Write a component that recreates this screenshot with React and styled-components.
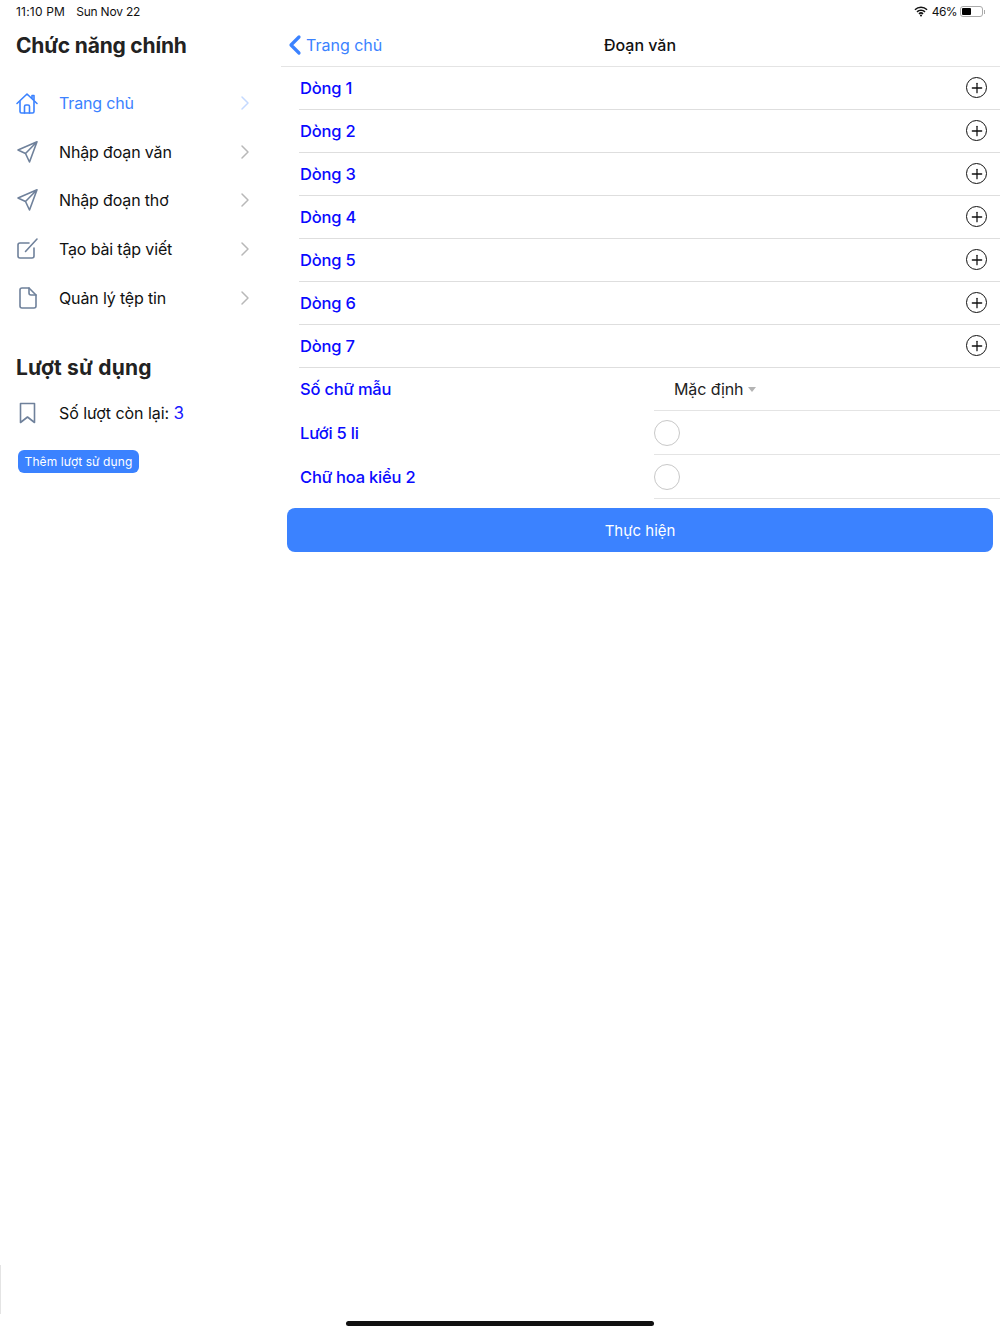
import React from 'react'
import styled, { createGlobalStyle } from 'styled-components'
import { ChevronRight, ChevronLeft, Plus } from 'lucide-react'

const GlobalStyle = createGlobalStyle`
  html, body { margin: 0; padding: 0; background: #fff; }
  body { font-family: Inter, "Noto Sans", "Liberation Sans", sans-serif; }
  * { box-sizing: border-box; }
`

const HomeIcon = () => (
  <LineIcon viewBox="0 0 24 24">
    <path d="M2 12.500 12 3l10 9.500M17 7.500V4.500h2v4.800" />
    <path d="M5 10.500v10a1.500 1.500 0 0 0 1.500 1.500h11a1.500 1.500 0 0 0 1.500-1.500v-10" />
    <path d="M9.500 22v-6.500a1.500 1.500 0 0 1 1.500-1.500h2a1.500 1.500 0 0 1 1.500 1.500V22" />
  </LineIcon>
)

const PlaneIcon = () => (
  <LineIcon viewBox="0 0 24 24">
    <path d="M22 1.800 3 10l7.500 3.500 4 8.500zM22 1.800 10.500 13.500" />
  </LineIcon>
)

const PenIcon = () => (
  <LineIcon viewBox="0 0 24 24">
    <path d="M14 6H5a2 2 0 0 0-2 2v11a2 2 0 0 0 2 2h12a2 2 0 0 0 2-2v-8" />
    <path d="M10.500 14.500 22 2" />
  </LineIcon>
)

const FileIcon = () => (
  <LineIcon viewBox="0 0 24 24">
    <path d="M5 4a2 2 0 0 1 2-2h7l7 7v11a2 2 0 0 1-2 2H7a2 2 0 0 1-2-2z" />
    <path d="M14 2v5a2 2 0 0 0 2 2h5" />
  </LineIcon>
)

const BookmarkIcon = () => (
  <LineIcon viewBox="0 0 24 24">
    <path d="M5.500 2.500h14v19l-7-5.500-7 5.500z" />
  </LineIcon>
)

const menu = [
  { label: 'Trang chủ', Icon: HomeIcon, active: true },
  { label: 'Nhập đoạn văn', Icon: PlaneIcon },
  { label: 'Nhập đoạn thơ', Icon: PlaneIcon },
  { label: 'Tạo bài tập viết', Icon: PenIcon },
  { label: 'Quản lý tệp tin', Icon: FileIcon },
]

const lines = ['Dòng 1', 'Dòng 2', 'Dòng 3', 'Dòng 4', 'Dòng 5', 'Dòng 6', 'Dòng 7']

export default function App() {
  return (
    <Page>
      <GlobalStyle />
      <StatusBar>
        <StatusLeft><TimeText>11:10 PM</TimeText><DateText>Sun Nov 22</DateText></StatusLeft>
        <StatusRight>
          <svg width="14" height="11" viewBox="0 0 15 11">
            <path d="M1 3.600a9.400 9.400 0 0 1 13 0M3.200 5.900a6.200 6.200 0 0 1 8.600 0M5.300 8a3.200 3.200 0 0 1 4.400 0" fill="none" stroke="#111" strokeWidth="1.600" />
            <circle cx="7.500" cy="9.800" r="1.100" fill="#111" />
          </svg>
          <Percent>46%</Percent>
          <Battery><BatteryFill style={{ width: '46%' }} /></Battery>
          <BatteryTip />
        </StatusRight>
      </StatusBar>
      <Body>
        <Sidebar>
          <SideTitle>Chức năng chính</SideTitle>
          <Menu>
            {menu.map(({ label, Icon, active }) => (
              <MenuItem key={label} $active={active}>
                <IconSlot><Icon /></IconSlot>
                <MenuLabel>{label}</MenuLabel>
                <Chevron $active={active}><ChevronRight size={24} strokeWidth={1.500} /></Chevron>
              </MenuItem>
            ))}
          </Menu>
          <UsageTitle>Lượt sử dụng</UsageTitle>
          <UsageRow>
            <IconSlot><BookmarkIcon /></IconSlot>
            <Remaining>Số lượt còn lại: <Count>3</Count></Remaining>
          </UsageRow>
          <AddButton>Thêm lượt sử dụng</AddButton>
          <Sliver />
        </Sidebar>
        <Main>
          <NavBar>
            <BackLink><ChevronLeft size={32} strokeWidth={2.400} /><span>Trang chủ</span></BackLink>
            <NavTitle>Đoạn văn</NavTitle>
          </NavBar>
          {lines.map((line) => (
            <LineRow key={line}>
              <BlueLabel>{line}</BlueLabel>
              <AddCircle><Plus size={16} strokeWidth={1.900} /></AddCircle>
            </LineRow>
          ))}
          <OptionRow $height={43}>
            <BlueLabel>Số chữ mẫu</BlueLabel>
            <OptionValue>
              <PickerText>Mặc định</PickerText>
              <Caret />
            </OptionValue>
          </OptionRow>
          <OptionRow>
            <BlueLabel>Lưới 5 li</BlueLabel>
            <OptionValue><Radio /></OptionValue>
          </OptionRow>
          <OptionRow>
            <BlueLabel>Chữ hoa kiểu 2</BlueLabel>
            <OptionValue><Radio /></OptionValue>
          </OptionRow>
          <SubmitButton>Thực hiện</SubmitButton>
        </Main>
      </Body>
      <HomeArea><HomeIndicator /></HomeArea>
    </Page>
  )
}

const Page = styled.div`
  width: 1000px;
  height: 1334px;
  display: flex;
  flex-direction: column;
  overflow: hidden;
  background: #fff;
`

const StatusBar = styled.div`
  height: 24px;
  display: flex;
  justify-content: space-between;
  align-items: center;
  padding: 0 15px 1px 16px;
  font-size: 12px;
  color: #111;
`

const StatusLeft = styled.div`
  display: flex;
  gap: 11px;
`

const TimeText = styled.span`
  letter-spacing: 0.2px;
`

const DateText = styled.span`
  letter-spacing: -0.2px;
`

const StatusRight = styled.div`
  display: flex;
  align-items: center;
  gap: 3px;
  svg { margin-right: 1px; }
`

const Percent = styled.span`
  letter-spacing: -0.600px;
`

const Battery = styled.div`
  width: 23px;
  height: 11px;
  border: 1px solid #aaa;
  border-radius: 3px;
  padding: 1px;
`

const BatteryFill = styled.div`
  height: 100%;
  background: #000;
  border-radius: 1px;
`

const BatteryTip = styled.div`
  width: 1px;
  height: 4px;
  background: #aaa;
  margin-left: -2px;
`

const Body = styled.div`
  flex: 1;
  display: flex;
  min-height: 0;
`

const Sidebar = styled.aside`
  width: 281px;
  display: flex;
  flex-direction: column;
  align-items: flex-start;
`

const SideTitle = styled.h2`
  margin: 1px 0 0;
  height: 42px;
  line-height: 42px;
  padding-left: 16px;
  font-size: 21px;
  font-weight: 700;
  letter-spacing: -0.2px;
  color: #222;
`

const Menu = styled.nav`
  width: 100%;
  margin-top: 11.500px;
`

const MenuItem = styled.div`
  height: 48.800px;
  display: flex;
  align-items: center;
  padding: 0 20px 0 15px;
  color: ${(p) => (p.$active ? '#3b82ff' : '#111')};
  svg { color: ${(p) => (p.$active ? '#3b82ff' : '#6f819b')}; }
`

const IconSlot = styled.span`
  width: 44px;
  flex: none;
  display: flex;
`

const LineIcon = styled.svg`
  width: 24px;
  height: 24px;
  fill: none;
  stroke: currentColor;
  stroke-width: 1.600;
  stroke-linejoin: round;
  stroke-linecap: round;
`

const MenuLabel = styled.span`
  flex: 1;
  font-size: 16px;
  letter-spacing: -0.150px;
`

const Chevron = styled.span`
  display: flex;
  margin-right: 4px;
  svg { color: ${(p) => (p.$active ? '#c4d9ff' : '#b8b8b8')}; }
`

const UsageTitle = styled.h2`
  margin: 31px 0 0;
  padding-left: 16px;
  line-height: 30px;
  font-size: 21px;
  font-weight: 700;
  letter-spacing: 0.2px;
  color: #222;
`

const UsageRow = styled.div`
  width: 100%;
  height: 48px;
  margin-top: 6px;
  display: flex;
  align-items: center;
  padding-left: 15px;
  color: #111;
  svg { color: #6f819b; }
`

const Remaining = styled.span`
  flex: 1;
  font-size: 16px;
  letter-spacing: -0.050px;
`

const Count = styled.span`
  font-size: 17px;
  color: #1a1aff;
`

const AddButton = styled.button`
  margin: 13px 0 0 18px;
  width: 121px;
  height: 23px;
  padding: 0;
  border: 0;
  border-radius: 6px;
  background: #3b82ff;
  color: #fff;
  font: 400 12px Inter, sans-serif;
  letter-spacing: 0.1px;
`

const Sliver = styled.div`
  margin-top: auto;
  width: 1px;
  height: 49px;
  background: #e4e4e4;
`

const Main = styled.main`
  flex: 1;
  min-width: 0;
`

const NavBar = styled.header`
  position: relative;
  height: 43px;
  padding-right: 1px;
  display: flex;
  align-items: center;
  justify-content: center;
  border-bottom: 1px solid #e4e4e4;
`

const BackLink = styled.a`
  position: absolute;
  left: -2px;
  top: 0;
  height: 42px;
  display: flex;
  align-items: center;
  color: #3b82ff;
  font-size: 16px;
  span { margin-left: -5px; }
`

const NavTitle = styled.div`
  font-size: 16px;
  font-weight: 500;
  color: #111;
`

const LineRow = styled.div`
  height: 43px;
  margin-left: 18px;
  display: flex;
  align-items: center;
  justify-content: space-between;
  padding-right: 13px;
  border-bottom: 1px solid #dedede;
`

const BlueLabel = styled.span`
  padding-left: 1px;
  font-size: 16.500px;
  font-weight: 500;
  letter-spacing: -0.200px;
  color: #0a0aff;
`

const AddCircle = styled.span`
  width: 21px;
  height: 21px;
  margin-bottom: 1px;
  border: 1.800px solid #111;
  border-radius: 50%;
  display: flex;
  align-items: center;
  justify-content: center;
  color: #111;
`

const OptionRow = styled.div`
  height: ${(p) => p.$height || 44}px;
  margin-left: 18px;
  display: grid;
  grid-template-columns: 355px 1fr;
  align-items: center;
  > span { padding-bottom: ${(p) => (p.$height ? 2 : 0)}px; }
`

const OptionValue = styled.div`
  height: 100%;
  display: flex;
  align-items: center;
  border-bottom: 1px solid #e4e4e4;
`

const PickerText = styled.span`
  margin-left: 20px;
  font-size: 16px;
  letter-spacing: -0.100px;
  color: #222;
`

const Caret = styled.span`
  margin-left: 5px;
  width: 0;
  height: 0;
  border-left: 4.500px solid transparent;
  border-right: 4.500px solid transparent;
  border-top: 5px solid #b4b4b4;
`

const Radio = styled.span`
  width: 26px;
  height: 26px;
  border: 1px solid #c8c8c8;
  border-radius: 50%;
  background: #fff;
`

const SubmitButton = styled.button`
  display: block;
  width: 706px;
  height: 44px;
  margin: 9px 0 0 6px;
  border: 0;
  border-radius: 8px;
  background: #3b82ff;
  color: #fff;
  font: 400 15px Inter, sans-serif;
`

const HomeArea = styled.div`
  height: 20px;
  padding-top: 7px;
  display: flex;
  justify-content: center;
`

const HomeIndicator = styled.div`
  width: 308px;
  height: 5px;
  border-radius: 3px;
  background: #111;
`
